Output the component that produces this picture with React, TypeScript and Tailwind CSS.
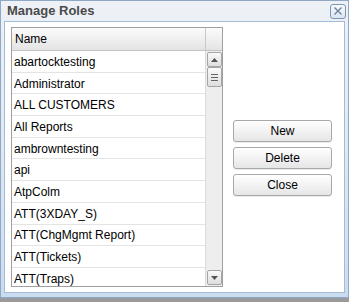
import React from "react";

const roles = [
  "abartocktesting",
  "Administrator",
  "ALL CUSTOMERS",
  "All Reports",
  "ambrowntesting",
  "api",
  "AtpColm",
  "ATT(3XDAY_S)",
  "ATT(ChgMgmt Report)",
  "ATT(Tickets)",
  "ATT(Traps)",
];

function Btn({ label }: { label: string }) {
  return (
    <button className="h-[22px] w-[99px] rounded-[3px] border border-[#a8a8a8] bg-gradient-to-b from-white to-[#e6e6e6] text-[12px] leading-none text-black shadow-[0_1px_0_rgba(0,0,0,0.08)]">
      {label}
    </button>
  );
}

export default function App() {
  return (
    <div
      className="h-[302px] w-[349px] bg-[#9a9a9a] text-[12px]"
      style={{ fontFamily: '"Liberation Sans", Arial, sans-serif' }}
    >
      <div className="flex h-[298px] w-[349px] flex-col border border-[#8fa8c6] bg-gradient-to-b from-[#eef2f7] via-[#dfe8f3] to-[#cbdcf0]">
        {/* title bar */}
        <div className="flex h-[20px] items-center justify-between pl-[6px] pr-[2px]">
          <span className="text-[13px] font-bold text-[#4a4a4a]">Manage Roles</span>
          <div className="flex h-[15px] w-[16px] items-center justify-center rounded-[3px] border border-[#7d96b4] bg-gradient-to-b from-[#f6f9fc] to-[#dce6f1]">
            <svg width="10" height="10" viewBox="0 0 10 10">
              <path d="M1.5 1.5 L8.5 8.5 M8.5 1.5 L1.5 8.5" stroke="#6a7f99" strokeWidth="1.3" />
            </svg>
          </div>
        </div>

        {/* body */}
        <div className="mx-[3px] mb-[4px] flex flex-1 items-start border border-[#a3bbd6] bg-white pl-[6px] pt-[5px] pr-[10px]">
          {/* grid */}
          <div className="flex h-[260px] w-[212px] flex-col overflow-hidden border border-[#a0a0a0]">
            <div className="flex h-[23px] shrink-0 border-b border-[#c4c4c4] bg-gradient-to-b from-[#fbfbfb] to-[#e4e4e4]">
              <div className="flex flex-1 items-center pl-[3px] text-black">Name</div>
              <div className="w-[17px] border-l border-[#c8c8c8]" />
            </div>
            <div className="flex min-h-0 flex-1">
              <div className="min-w-0 flex-1 overflow-hidden">
                {roles.map((r) => (
                  <div
                    key={r}
                    className="flex h-[21.7px] items-center border-b border-[#e4e4e4] pl-[2px] pt-[1px] text-black"
                  >
                    {r}
                  </div>
                ))}
              </div>
              {/* scrollbar */}
              <div className="flex w-[17px] flex-col items-center border-l border-[#dcdcdc] bg-[#eeeeee] pt-[1px] pb-[1px]">
                <div className="flex h-[15px] w-[15px] items-center justify-center rounded-[2px] border border-[#a6a6a6] bg-gradient-to-b from-[#fafafa] to-[#dedede]">
                  <svg width="7" height="4" viewBox="0 0 7 4">
                    <path d="M3.5 0 L7 4 L0 4 Z" fill="#555" />
                  </svg>
                </div>
                <div className="flex h-[20px] w-[15px] flex-col items-center justify-center gap-[2px] rounded-[2px] border border-[#a6a6a6] bg-gradient-to-b from-[#fafafa] to-[#dedede]">
                  <div className="h-px w-[7px] bg-[#666]" />
                  <div className="h-px w-[7px] bg-[#666]" />
                  <div className="h-px w-[7px] bg-[#666]" />
                </div>
                <div className="flex-1" />
                <div className="flex h-[15px] w-[15px] items-center justify-center rounded-[2px] border border-[#a6a6a6] bg-gradient-to-b from-[#fafafa] to-[#dedede]">
                  <svg width="7" height="4" viewBox="0 0 7 4">
                    <path d="M0 0 L7 0 L3.5 4 Z" fill="#555" />
                  </svg>
                </div>
              </div>
            </div>
          </div>

          {/* buttons */}
          <div className="ml-[10px] mt-[93px] flex flex-col gap-[5px]">
            <Btn label="New" />
            <Btn label="Delete" />
            <Btn label="Close" />
          </div>
        </div>
      </div>
    </div>
  );
}
